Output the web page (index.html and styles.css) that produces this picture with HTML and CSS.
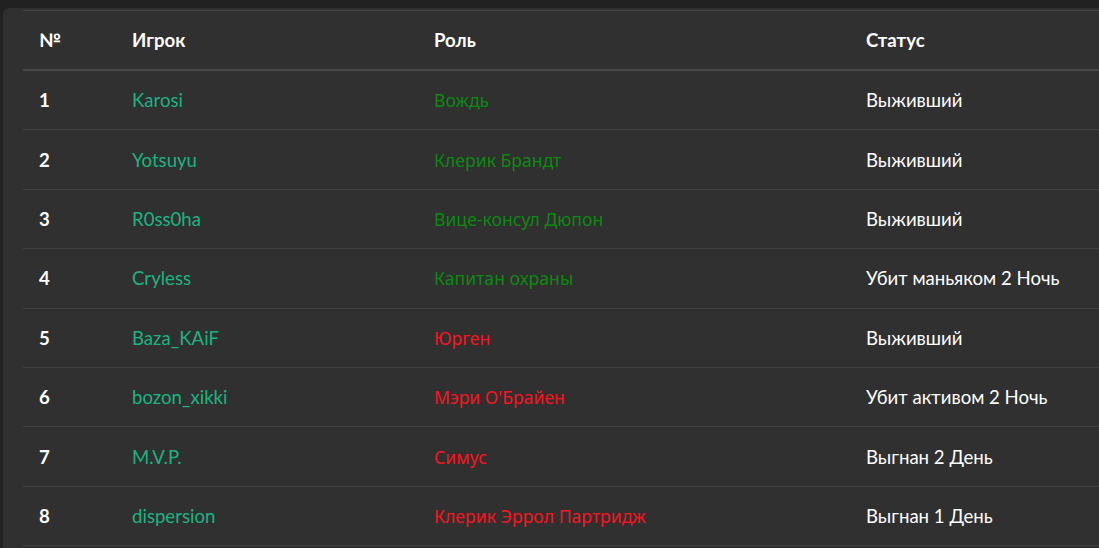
FILE: index.html
```html
<!DOCTYPE html>
<html lang="ru">
<head>
<meta charset="utf-8">
<link rel="stylesheet" href="styles.css">
</head>
<body>
<div class="card">
  <table class="players">
    <thead>
      <tr><th class="c-num">№</th><th class="c-name">Игрок</th><th class="c-role">Роль</th><th class="c-status">Статус</th></tr>
    </thead>
    <tbody>
      <tr><td class="num">1</td><td class="name">Karosi</td><td class="role town">Вождь</td><td class="status">Выживший</td></tr>
      <tr><td class="num">2</td><td class="name">Yotsuyu</td><td class="role town">Клерик Брандт</td><td class="status">Выживший</td></tr>
      <tr><td class="num">3</td><td class="name">R0ss0ha</td><td class="role town">Вице-консул Дюпон</td><td class="status">Выживший</td></tr>
      <tr><td class="num">4</td><td class="name">Cryless</td><td class="role town">Капитан охраны</td><td class="status">Убит маньяком 2 Ночь</td></tr>
      <tr><td class="num">5</td><td class="name">Baza_KAiF</td><td class="role mafia">Юрген</td><td class="status">Выживший</td></tr>
      <tr><td class="num">6</td><td class="name">bozon_xikki</td><td class="role mafia">Мэри О'Брайен</td><td class="status">Убит активом 2 Ночь</td></tr>
      <tr><td class="num">7</td><td class="name">M.V.P.</td><td class="role mafia">Симус</td><td class="status">Выгнан 2 День</td></tr>
      <tr><td class="num">8</td><td class="name">dispersion</td><td class="role mafia">Клерик Эррол Партридж</td><td class="status">Выгнан 1 День</td></tr>
    </tbody>
  </table>
</div>
</body>
</html>
```
FILE: styles.css
```css
html, body {
  margin: 0;
  padding: 0;
  background: #212121;
  overflow: hidden;
}
body {
  font-family: Lato, "Noto Sans", sans-serif;
  color: #fff;
}
.card {
  margin: 8px 0 0 3px;
  width: 1140px;
  height: 600px;
  background: #303030;
  border-radius: 6px;
  padding: 2px 0 0 20px;
  box-sizing: border-box;
}
.players {
  border-collapse: collapse;
  width: 1117px;
  table-layout: fixed;
}
.players th, .players td {
  text-align: left;
  padding: 0 16px;
  vertical-align: middle;
}
.players th {
  font-weight: 700;
  font-size: 18.6px;
  height: 58px;
  border-top: 1px solid #454545;
  border-bottom: 2px solid #474747;
}
.players td {
  font-size: 18.6px;
  height: 58.4px;
  border-bottom: 1px solid #424242;
}
.c-num { width: 61px; }
.c-name { width: 270px; }
.c-role { width: 400px; }
.players td.num { font-weight: 700; }
.players td.name { color: #1ab481; }
.players td.role {
  font-family: "Noto Sans", sans-serif;
  font-size: 17.6px;
}
.players td.town { color: #0b8a12; }
.players td.mafia { color: #fb1420; }
.players td.status { color: #fff; }
```
